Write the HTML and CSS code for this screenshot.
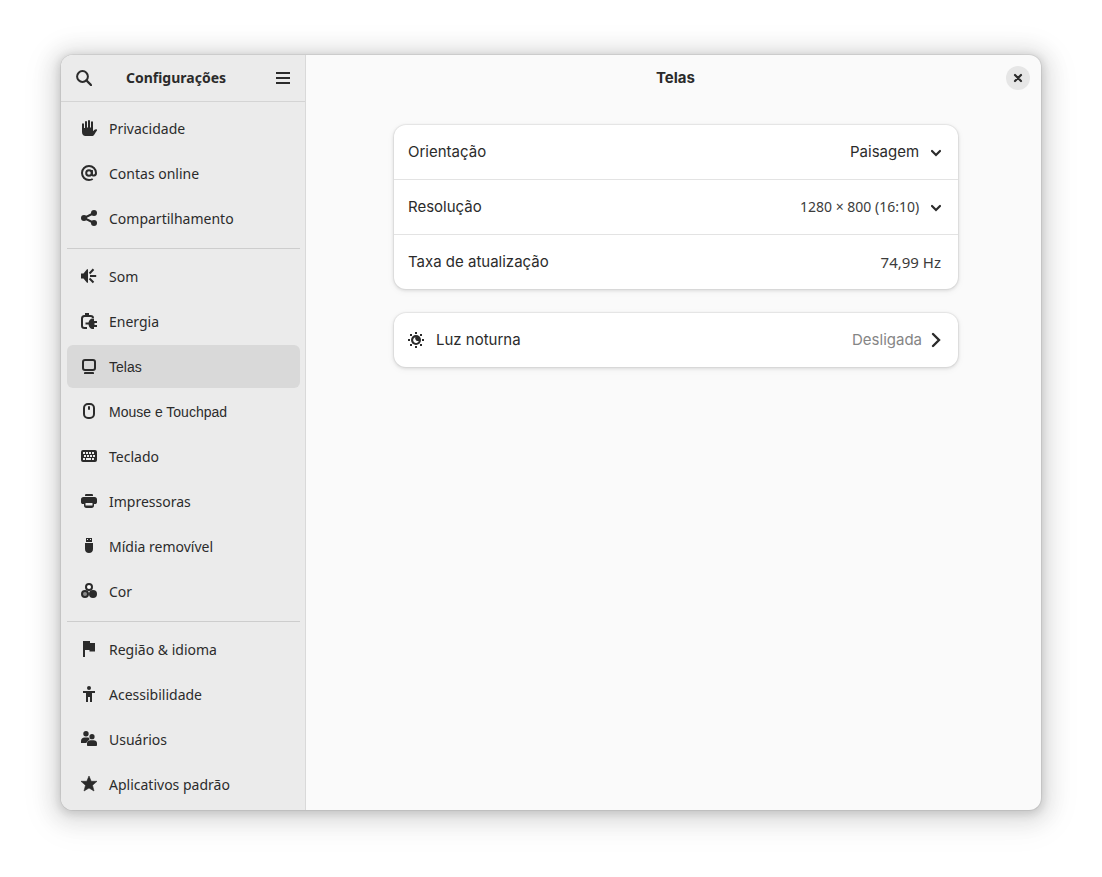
FILE: index.html
```html
<!DOCTYPE html>
<html lang="pt-BR">
<head>
<meta charset="utf-8">
<meta name="viewport" content="width=device-width, initial-scale=1">
<title>Configurações</title>
<link rel="stylesheet" href="styles.css">
</head>
<body>
<div class="window">
  <aside class="sidebar">
    <header class="bar sidebar-bar">
      <button class="icon-button" type="button" aria-label="Pesquisar">
        <svg class="icon" viewBox="0 0 16 16"><circle cx="6.5" cy="6.5" r="5.4" fill="none" stroke="currentColor" stroke-width="2"/><path d="M10.5 10.5 15 15" stroke="currentColor" stroke-width="2.4" stroke-linecap="round"/></svg>
      </button>
      <h1 class="title sidebar-title">Configurações</h1>
      <button class="icon-button" type="button" aria-label="Menu">
        <svg class="icon" viewBox="0 0 16 16"><path d="M1 2h14v2H1zM1 7h14v2H1zM1 12h14v2H1z"/></svg>
      </button>
    </header>
    <nav class="list">
      <a class="item" href="#"><svg class="icon" viewBox="0 0 16 16"><path d="M1 12V4.200a1 1 0 0 1 2 0V8h1V2a1 1 0 0 1 2 0v5.500h1V1a1 1 0 0 1 2 0v6.500h1V2.200a1 1 0 0 1 2 0V11.300l1.500-1.500c1.200-.9 2.700-.6 2.700.6-1.200 1-1.700 3-3.600 5-.6.6-1.300.6-2.300.6H4.500C2.500 16 1 14.500 1 12z"/></svg>Privacidade</a>
      <a class="item" href="#"><svg class="icon" viewBox="0 0 16 16"><g fill="none" stroke="currentColor" stroke-width="2"><circle cx="8" cy="8" r="2.800"/><path d="M10.900 5v3.800c0 2.700 4.100 2.300 4.100-.8a7 7 0 1 0-7 7c1.400 0 2.600-.3 3.700-1"/></g></svg>Contas online</a>
      <a class="item" href="#"><svg class="icon" viewBox="0 0 16 16"><path d="M13 3 3 8l10 5" fill="none" stroke="currentColor" stroke-width="2"/><circle cx="13" cy="3" r="3"/><circle cx="3" cy="8" r="3"/><circle cx="13" cy="13" r="3"/></svg>Compartilhamento</a>
      <hr class="separator">
      <a class="item" href="#"><svg class="icon" viewBox="0 0 16 16"><path d="M0 5.500h2.500L6 1.200h1v13.600H6L2.500 10.500H0z"/><path d="M8.500 5.500 12.500 1.200M9 8h6.200M8.500 10.500l4 4" stroke="currentColor" stroke-width="2"/></svg>Som</a>
      <a class="item" href="#"><svg class="icon" viewBox="0 0 16 16"><path d="M6 15H3.500C1.800 15 1 14.300 1 13V5.500C1 4 1.800 3 3.500 3h6C11 3 12 4 12 5" fill="none" stroke="currentColor" stroke-width="2"/><path d="M4 0h4v3H4zM4.500 9.500H7.500C8 7.200 9.500 5.500 11.500 5.500H13V8h3v2h-2.500v2H16v2h-3v2h-1.500c-2 0-3.500-1.700-4-4.500h-3z"/></svg>Energia</a>
      <a class="item selected alt" href="#" aria-current="page"><svg class="icon" viewBox="0 0 16 16"><rect x="2" y="2" width="12" height="10" rx="2" fill="none" stroke="currentColor" stroke-width="2"/><path d="M4 14h8c.8 0 1 .5 1 2H3c0-1.500.2-2 1-2z"/></svg>Telas</a>
      <a class="item alt" href="#"><svg class="icon" viewBox="0 0 16 16"><rect x="3" y="1" width="10" height="14" rx="4" fill="none" stroke="currentColor" stroke-width="2"/><rect x="7" y="3" width="2" height="4" rx="1"/></svg>Mouse e Touchpad</a>
      <a class="item" href="#"><svg class="icon" viewBox="0 0 16 16"><path fill-rule="evenodd" d="M2 2h12a2 2 0 0 1 2 2v8a2 2 0 0 1-2 2H2a2 2 0 0 1-2-2V4a2 2 0 0 1 2-2zM2 4v2h2V4zm3 0v2h2V4zm3 0v2h2V4zm3 0v2h2V4zM3 7v2h2V7zm3 0v2h2V7zm3 0v2h2V7zm3 0v2h2V7zM2 10v2h2v-2zm3 0v2h5v-2zm6 0v2h2v-2z"/></svg>Teclado</a>
      <a class="item" href="#"><svg class="icon" viewBox="0 0 16 16"><path d="M5 1h6c.7 0 1 .4 1 2H4c0-1.600.3-2 1-2z"/><path fill-rule="evenodd" d="M2.500 4h11C15.200 4 16 5 16 6.500V9c0 1.500-.8 2-2 2h-1v1.500c0 1.500-.8 2.500-2.500 2.500h-5C3.800 15 3 14 3 12.500V11H2c-1.200 0-2-.5-2-2V6.500C0 5 .8 4 2.500 4zM4.500 10v2.500h7V10z"/></svg>Impressoras</a>
      <a class="item" href="#"><svg class="icon" viewBox="0 0 16 16"><path fill-rule="evenodd" d="M5 0h6v4H5zM6 1v1h1V1zm3 0v1h1V1zM4 5h8v6c0 2.500-1.500 4-4 4s-4-1.500-4-4z"/></svg>Mídia removível</a>
      <a class="item" href="#"><svg class="icon" viewBox="0 0 16 16"><circle cx="8" cy="4" r="3" fill="#fff" stroke="currentColor" stroke-width="2"/><circle cx="12" cy="11" r="4"/><circle cx="4" cy="11" r="3" fill="#8b8b8b" stroke="currentColor" stroke-width="2"/></svg>Cor</a>
      <hr class="separator">
      <a class="item" href="#"><svg class="icon" viewBox="0 0 16 16"><path d="M2 0h7v2h5v8.500H8.500V9H4v7H2z"/></svg>Região &amp; idioma</a>
      <a class="item" href="#"><svg class="icon" viewBox="0 0 16 16"><circle cx="8" cy="2" r="2"/><path d="M2 5h12v2h-3v9H9v-5H7v5H5V7H2z"/></svg>Acessibilidade</a>
      <a class="item" href="#"><svg class="icon" viewBox="0 0 16 16"><circle cx="5" cy="2.800" r="2.700"/><circle cx="11" cy="5.700" r="2.600"/><path d="M3.500 6.500h3c1 0 1.700.4 2 1.200.4 1.300-2.500 2-3 4.300H0v-2c0-2 1.500-3.500 3.500-3.500zM9.500 9.300h3c2 0 3.500 1.200 3.500 3V14c0 .7-.4 1-1 1H7c-.6 0-1-.3-1-1v-1.700c0-1.800 1.500-3 3.500-3z"/></svg>Usuários</a>
      <a class="item" href="#"><svg class="icon" viewBox="0 0 16 16"><path d="M8 0l2.200 5.300H16l-4.500 4L13 15l-5-3-5 3 1.500-5.700L0 5.300h5.800z" stroke="currentColor" stroke-width=".6" stroke-linejoin="round"/></svg>Aplicativos padrão</a>
    </nav>
  </aside>
  <main class="main">
    <header class="bar main-bar">
      <h2 class="title">Telas</h2>
      <button class="close" type="button" aria-label="Fechar">
        <svg class="icon" viewBox="0 0 16 16"><path d="M5 5l6 6M11 5l-6 6" stroke="currentColor" stroke-width="2.200" stroke-linecap="round"/></svg>
      </button>
    </header>
    <div class="content">
      <section class="card">
        <div class="row">
          <label class="name" for="orientation">Orientação</label>
          <span class="dropdown">
            <select id="orientation" class="select"><option>Paisagem</option></select>
            <svg class="icon arrow" viewBox="0 0 16 16"><path d="M4 7l4 4 4-4" fill="none" stroke="currentColor" stroke-width="2.200" stroke-linecap="round"/></svg>
          </span>
        </div>
        <div class="row">
          <label class="name" for="resolution">Resolução</label>
          <span class="dropdown">
            <select id="resolution" class="select mode"><option>1280 × 800 (16:10)</option></select>
            <svg class="icon arrow" viewBox="0 0 16 16"><path d="M4 7l4 4 4-4" fill="none" stroke="currentColor" stroke-width="2.200" stroke-linecap="round"/></svg>
          </span>
        </div>
        <div class="row">
          <span class="name">Taxa de atualização</span>
          <span class="value">74,99 Hz</span>
        </div>
      </section>
      <section class="card">
        <a class="row link" href="#">
          <svg class="icon" viewBox="0 0 16 16"><path d="M7 0h2v2H7zM7 14h2v2H7zM0 7h2v2H0zM14 7h2v2h-2zM2 2h2v2H2zM12 2h2v2h-2zM2 12h2v2H2zM12 12h2v2h-2z"/><circle cx="8" cy="8" r="5"/><path d="M7.300 5.300A2.900 2.900 0 1 0 10.800 9 2.900 2.900 0 0 1 7.300 5.300z" fill="#fff"/></svg>
          <span class="name">Luz noturna</span>
          <span class="state">Desligada</span>
          <svg class="icon next" viewBox="0 0 16 16"><path d="M5 2l6 6-6 6" fill="none" stroke="currentColor" stroke-width="2.400" stroke-linecap="round"/></svg>
        </a>
      </section>
    </div>
  </main>
</div>
</body>
</html>
```
FILE: styles.css
```css
* {
  box-sizing: border-box;
}

body {
  margin: 0;
  min-height: 100vh;
  display: flex;
  padding: 55px 61px 67px;
  background: #fff;
  color: #2b2b2b;
  font: 15px/20px Inter, sans-serif;
}

button,
select {
  border: 0;
  margin: 0;
  font: inherit;
  color: inherit;
}

.icon {
  width: 16px;
  height: 16px;
  flex: none;
  display: block;
  fill: currentColor;
}

.window {
  flex: 1;
  display: flex;
  border-radius: 12px;
  overflow: hidden;
  background: #fafafa;
  box-shadow:
    0 0 0 1px rgba(0, 0, 0, 0.06),
    0 2px 8px 2px rgba(0, 0, 0, 0.13),
    0 3px 20px 10px rgba(0, 0, 0, 0.09),
    0 6px 32px 16px rgba(0, 0, 0, 0.04);
}

.sidebar {
  flex: none;
  width: 245px;
  background: #ebebeb;
  border-right: 1px solid #d9d9d9;
}

.bar {
  display: flex;
  align-items: center;
  height: 46px;
}

.sidebar-bar {
  height: 47px;
  padding: 0 5px 0 6px;
  border-bottom: 1px solid #d4d4d4;
}

.icon-button {
  display: grid;
  place-items: center;
  width: 34px;
  height: 34px;
  padding: 0;
  border-radius: 6px;
  background: transparent;
}

.title {
  flex: 1;
  margin: 0;
  text-align: center;
  font-size: 15px;
  line-height: 20px;
  font-weight: 700;
}

.sidebar-title {
  padding-right: 15px;
  font-family: "Noto Sans", sans-serif;
  font-size: 14px;
}

.list {
  display: flex;
  flex-direction: column;
  gap: 2px;
  padding: 5px 5px 4px 6px;
}

.item {
  display: flex;
  align-items: center;
  gap: 12px;
  height: 43px;
  padding: 0 14px;
  border-radius: 6px;
  color: inherit;
  text-decoration: none;
  font-family: "Noto Sans", sans-serif;
  font-size: 14px;
}

.item .icon {
  margin-bottom: 1px;
}

.alt {
  font-family: "Liberation Sans", sans-serif;
}

.selected {
  background: #d9d9d9;
}

.separator {
  width: 100%;
  height: 1px;
  margin: 6px 0 4px;
  border: 0;
  background: #cdcdcd;
}

.main {
  flex: 1;
  min-width: 0;
}

.main-bar {
  padding: 0 11px 0 39px;
}

.close {
  display: grid;
  place-items: center;
  width: 24px;
  height: 24px;
  padding: 0;
  border-radius: 50%;
  background: #e6e6e6;
}

.content {
  display: flex;
  flex-direction: column;
  gap: 24px;
  padding: 24px 83px 24px 88px;
}

.card {
  border-radius: 12px;
  background: #fff;
  box-shadow:
    0 0 0 1px rgba(0, 0, 0, 0.04),
    0 1px 3px 1px rgba(0, 0, 0, 0.09),
    0 2px 6px 2px rgba(0, 0, 0, 0.03);
}

.row {
  display: flex;
  align-items: center;
  height: 54px;
  padding: 0 14px;
}

.row + .row {
  height: 55px;
  border-top: 1px solid #e3e3e3;
}

.name {
  flex: 1;
}

.dropdown {
  position: relative;
}

.select {
  appearance: none;
  padding: 0 24px 0 0;
  background: transparent;
}

.arrow {
  position: absolute;
  top: 2px;
  right: 0;
  pointer-events: none;
}

.mode,
.value {
  color: #3c3c3c;
  font-family: "Noto Sans", sans-serif;
}

.mode {
  font-size: 14px;
}

.value {
  padding-right: 3px;
}

.link {
  gap: 12px;
  color: inherit;
  text-decoration: none;
}

.state {
  color: #858585;
}

.next {
  margin-left: -6px;
}
```
